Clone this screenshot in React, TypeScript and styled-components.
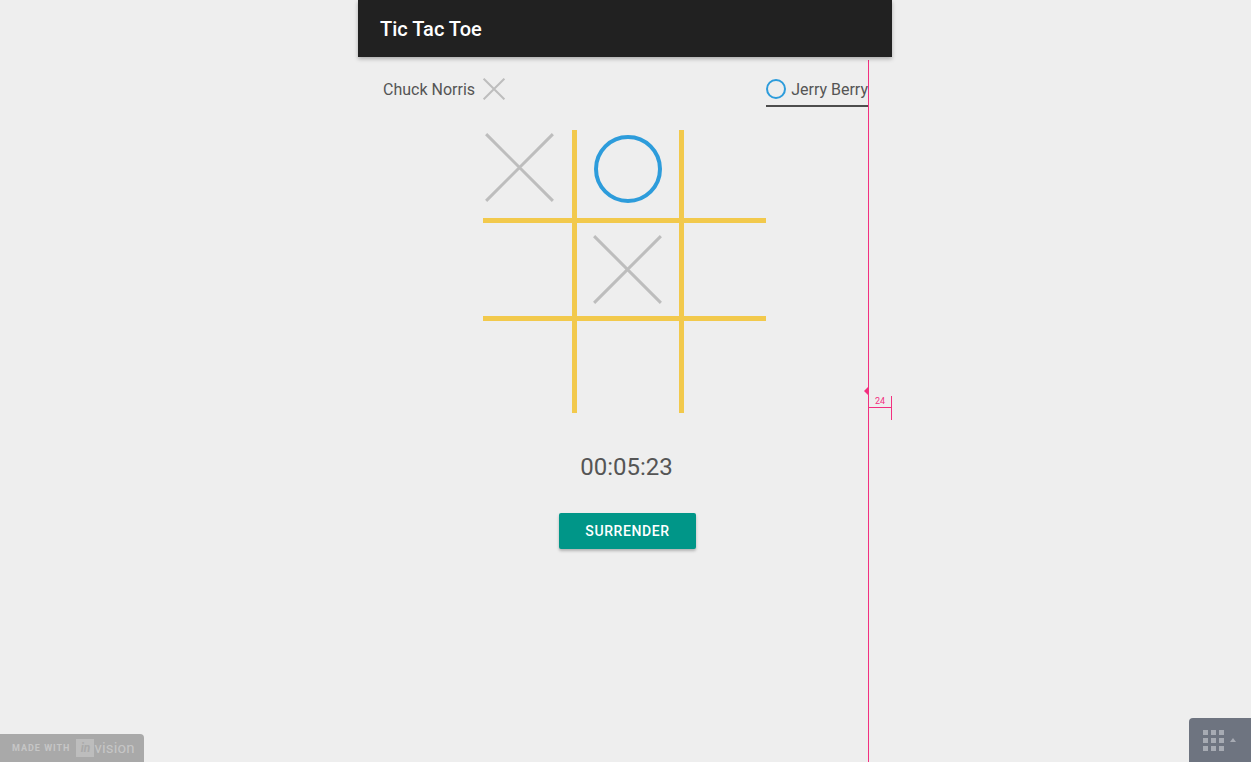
import React from "react";
import styled, { createGlobalStyle } from "styled-components";

const GlobalStyle = createGlobalStyle`
  html, body {
    margin: 0;
    padding: 0;
    background: #eeeeee;
    font-family: Roboto, "Noto Sans", Arial, sans-serif;
    overflow: hidden;
  }
`;

const Page = styled.div`
  width: 1250px;
  min-height: 762px;
  display: flex;
  justify-content: center;
  position: relative;
`;

const Screen = styled.div`
  width: 534px;
  display: flex;
  flex-direction: column;
  align-items: center;
  position: relative;
`;

const AppBar = styled.header`
  align-self: stretch;
  height: 57px;
  background: #212121;
  color: #ffffff;
  display: flex;
  align-items: center;
  padding-left: 22px;
  font-size: 20px;
  font-weight: 500;
  box-shadow: 0 2px 4px rgba(0, 0, 0, 0.28);
  position: relative;
  z-index: 1;
`;

const Players = styled.div`
  align-self: stretch;
  display: flex;
  justify-content: space-between;
  align-items: flex-start;
  padding: 20px 24px 0 25px;
`;

const Player = styled.div<{ $active?: boolean }>`
  display: flex;
  align-items: center;
  gap: ${(p) => (p.$active ? "5px" : "8px")};
  height: 24px;
  font-size: 16px;
  color: #555555;
  padding-bottom: ${(p) => (p.$active ? "4px" : "0")};
  border-bottom: ${(p) => (p.$active ? "2px solid #4d4d4d" : "none")};
`;

const Board = styled.div`
  margin-top: 23px;
  display: grid;
  grid-template-columns: 89px 102px 82px;
  grid-template-rows: 88px 93px 92px;
  gap: 5px;
  background: #f2c94c;
  margin-left: -2px;
`;

const Cell = styled.div<{ $corner?: boolean; $lift?: number }>`
  background: #eeeeee;
  display: flex;
  align-items: ${(p) => (p.$corner ? "flex-start" : "center")};
  justify-content: ${(p) => (p.$corner ? "flex-start" : "center")};
  padding: ${(p) => (p.$corner ? "2px 0 0 1px" : "0")};
  padding-bottom: ${(p) => (p.$lift ? `${p.$lift}px` : "0")};
`;

const Timer = styled.div`
  margin-top: 40px;
  margin-left: 3px;
  font-size: 24px;
  line-height: 28px;
  color: #555555;
`;

const Button = styled.button`
  margin-top: 32px;
  margin-left: 5px;
  width: 137px;
  height: 36px;
  border: none;
  border-radius: 2px;
  background: #009688;
  color: #ffffff;
  font-family: Roboto, Arial, sans-serif;
  font-size: 14px;
  font-weight: 500;
  letter-spacing: 0.6px;
  box-shadow: 0 2px 3px rgba(0, 0, 0, 0.25);
  cursor: pointer;
`;

const GuideLine = styled.div`
  position: absolute;
  left: 510px;
  top: 60px;
  width: 1px;
  height: 702px;
  background: #f2307f;
`;

const GuideMark = styled.div`
  position: absolute;
  left: 506px;
  top: 387px;
  width: 0;
  height: 0;
  border-top: 4px solid transparent;
  border-bottom: 4px solid transparent;
  border-right: 4px solid #f2307f;
`;

const GuideLabel = styled.div`
  position: absolute;
  left: 511px;
  top: 396px;
  width: 22px;
  height: 11px;
  border-bottom: 1px solid #f2307f;
  border-right: 1px solid #f2307f;
  color: #f2307f;
  font-size: 9px;
  line-height: 11px;
  text-align: center;
  &::after {
    content: "";
    position: absolute;
    right: -1px;
    top: 12px;
    width: 1px;
    height: 12px;
    background: #f2307f;
  }
`;

const MadeWith = styled.div`
  position: fixed;
  left: 0;
  bottom: 0;
  width: 144px;
  height: 28px;
  background: #a9a9a9;
  border-top-right-radius: 4px;
  display: flex;
  align-items: center;
  padding-left: 12px;
  box-sizing: border-box;
  color: #c6c6c6;
  gap: 6px;
`;

const MadeText = styled.span`
  font-size: 9px;
  font-weight: 700;
  letter-spacing: 1px;
`;

const InBox = styled.span`
  background: #bdbdbd;
  color: #a9a9a9;
  font-size: 12px;
  font-weight: 700;
  font-style: italic;
  width: 18px;
  height: 18px;
  display: inline-flex;
  align-items: center;
  justify-content: center;
`;

const VisionText = styled.span`
  font-size: 15px;
  margin-left: -6px;
  letter-spacing: 0.2px;
`;

const MenuTab = styled.div`
  position: fixed;
  right: 0;
  bottom: 0;
  width: 62px;
  height: 44px;
  background: #6e7480;
  border-top-left-radius: 4px;
  display: flex;
  align-items: center;
  padding-left: 14px;
  box-sizing: border-box;
  gap: 6px;
`;

const Dots = styled.div`
  display: grid;
  grid-template-columns: repeat(3, 5px);
  grid-template-rows: repeat(3, 5px);
  gap: 3px;
  span {
    background: #a7abb3;
  }
`;

const Caret = styled.div`
  width: 0;
  height: 0;
  border-left: 3px solid transparent;
  border-right: 3px solid transparent;
  border-bottom: 4px solid #a7abb3;
`;

const Cross = ({ size, stroke }: { size: number; stroke: number }) => (
  <svg width={size} height={size} viewBox="0 0 100 100">
    <path
      d="M3 3 L97 97 M97 3 L3 97"
      stroke="#bdbdbd"
      strokeWidth={stroke}
      fill="none"
    />
  </svg>
);

const Ring = ({ size, stroke }: { size: number; stroke: number }) => (
  <svg width={size} height={size} viewBox={`0 0 ${size} ${size}`}>
    <circle
      cx={size / 2}
      cy={size / 2}
      r={size / 2 - stroke / 2}
      stroke="#2d9cdb"
      strokeWidth={stroke}
      fill="none"
    />
  </svg>
);

const board: Array<string> = ["x", "o", "", "", "x", "", "", "", ""];

export default function App() {
  return (
    <Page>
      <GlobalStyle />
      <Screen>
        <AppBar>Tic Tac Toe</AppBar>
        <Players>
          <Player>
            Chuck Norris
            <Cross size={22} stroke={9} />
          </Player>
          <Player $active>
            <Ring size={20} stroke={2} />
            Jerry Berry
          </Player>
        </Players>
        <Board>
          {board.map((v, i) => (
            <Cell key={i} $corner={i === 0} $lift={v === "o" ? 10 : 0}>
              {v === "x" && <Cross size={71} stroke={4.2} />}
              {v === "o" && <Ring size={68} stroke={4} />}
            </Cell>
          ))}
        </Board>
        <Timer>00:05:23</Timer>
        <Button>SURRENDER</Button>
        <GuideLine />
        <GuideMark />
        <GuideLabel>24</GuideLabel>
      </Screen>
      <MadeWith>
        <MadeText>MADE WITH</MadeText>
        <InBox>in</InBox>
        <VisionText>vision</VisionText>
      </MadeWith>
      <MenuTab>
        <Dots>
          {Array.from({ length: 9 }).map((_, i) => (
            <span key={i} />
          ))}
        </Dots>
        <Caret />
      </MenuTab>
    </Page>
  );
}
